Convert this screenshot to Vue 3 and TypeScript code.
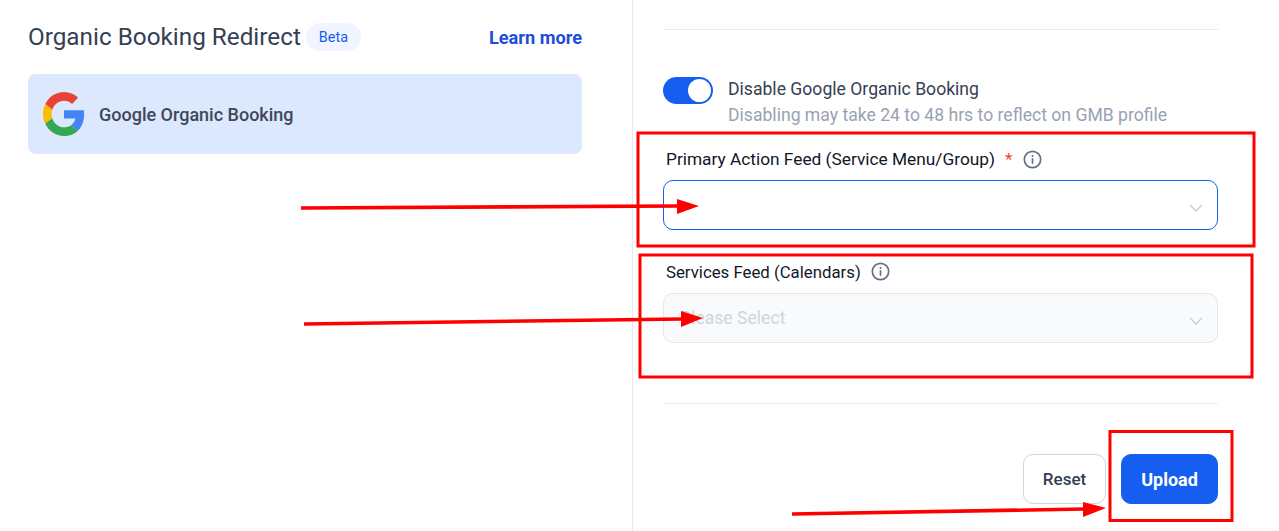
<script setup lang="ts">
interface Arrow {
  x1: number
  y1: number
  x2: number
  y2: number
  tip: string
}

interface Box {
  x: number
  y: number
  w: number
  h: number
}

// hand drawn markup on top of the screenshot
const boxes: Box[] = [
  { x: 638, y: 133, w: 616, h: 113 },
  { x: 640, y: 255, w: 612, h: 122 },
  { x: 1110, y: 431.5, w: 122, h: 89 },
]

const arrows: Arrow[] = [
  { x1: 301, y1: 208, x2: 678, y2: 206, tip: '677,199 699,206 677,214' },
  { x1: 304, y1: 324, x2: 682, y2: 319, tip: '681,311 703,318 681,327' },
  { x1: 792, y1: 514, x2: 1085, y2: 509, tip: '1083,502 1106,508 1083,517' },
]
</script>

<template>
  <div class="page">
    <aside class="side">
      <header class="side__head">
        <div class="side__title">
          <h2>Organic Booking Redirect</h2>
          <span class="beta">Beta</span>
        </div>
        <a class="learn">Learn more</a>
      </header>
      <div class="side__item">
        <svg class="g-logo" viewBox="0 0 48 48" width="42" height="44" preserveAspectRatio="none">
          <path fill="#EA4335" d="M24 9.5c3.54 0 6.71 1.22 9.21 3.6l6.85-6.85C35.9 2.38 30.47 0 24 0 14.62 0 6.51 5.38 2.56 13.22l7.98 6.19C12.43 13.72 17.74 9.5 24 9.5z" />
          <path fill="#4285F4" d="M46.98 24.55c0-1.57-.15-3.09-.38-4.55H24v9.02h12.94c-.58 2.96-2.26 5.48-4.78 7.18l7.73 6c4.51-4.18 7.09-10.36 7.09-17.65z" />
          <path fill="#FBBC05" d="M10.53 28.59c-.48-1.45-.76-2.99-.76-4.59s.27-3.14.76-4.59l-7.98-6.19C.92 16.46 0 20.12 0 24c0 3.88.92 7.54 2.56 10.78l7.97-6.19z" />
          <path fill="#34A853" d="M24 48c6.48 0 11.93-2.13 15.89-5.81l-7.73-6c-2.15 1.45-4.92 2.3-8.16 2.3-6.26 0-11.57-4.22-13.47-9.91l-7.98 6.19C6.51 42.62 14.62 48 24 48z" />
        </svg>
        <span>Google Organic Booking</span>
      </div>
    </aside>

    <main class="form">
      <hr class="rule" />

      <div class="toggle-row">
        <span class="toggle"><span class="toggle__knob"></span></span>
        <div class="toggle-row__text">
          <div class="toggle-row__label">Disable Google Organic Booking</div>
          <div class="toggle-row__hint">Disabling may take 24 to 48 hrs to reflect on GMB profile</div>
        </div>
      </div>

      <div class="field field--primary">
        <label class="field__label">
          Primary Action Feed (Service Menu/Group)
          <span class="req">*</span>
          <svg class="info" viewBox="0 0 20 20" width="19" height="19">
            <circle cx="10" cy="10" r="8.6" fill="none" stroke="#667085" stroke-width="1.8" />
            <path d="M10 9.2v4.6" stroke="#667085" stroke-width="1.8" stroke-linecap="round" />
            <circle cx="10" cy="6.3" r="1.1" fill="#667085" />
          </svg>
        </label>
        <div class="select select--focus">
          <svg class="chev" viewBox="0 0 14 8" width="14" height="8">
            <path d="M1 1l6 6 6-6" fill="none" stroke="#c9ccd2" stroke-width="1.3" />
          </svg>
        </div>
      </div>

      <div class="field field--calendars">
        <label class="field__label">
          Services Feed (Calendars)
          <svg class="info" viewBox="0 0 20 20" width="19" height="19">
            <circle cx="10" cy="10" r="8.6" fill="none" stroke="#667085" stroke-width="1.8" />
            <path d="M10 9.2v4.6" stroke="#667085" stroke-width="1.8" stroke-linecap="round" />
            <circle cx="10" cy="6.3" r="1.1" fill="#667085" />
          </svg>
        </label>
        <div class="select select--disabled">
          <span>Please Select</span>
          <svg class="chev" viewBox="0 0 14 8" width="14" height="8">
            <path d="M1 1l6 6 6-6" fill="none" stroke="#c9ccd2" stroke-width="1.3" />
          </svg>
        </div>
      </div>

      <hr class="rule rule--bottom" />

      <div class="actions">
        <button class="btn">Reset</button>
        <button class="btn btn--primary">Upload</button>
      </div>
    </main>

    <svg class="markup" viewBox="0 0 1279 531" width="1279" height="531">
      <rect
        v-for="(b, i) in boxes"
        :key="'b' + i"
        :x="b.x"
        :y="b.y"
        :width="b.w"
        :height="b.h"
        fill="none"
        stroke="#ff0000"
        stroke-width="3"
      />
      <g v-for="(a, i) in arrows" :key="'a' + i">
        <line :x1="a.x1" :y1="a.y1" :x2="a.x2" :y2="a.y2" stroke="#ff0000" stroke-width="3.6" />
        <polygon :points="a.tip" fill="#ff0000" />
      </g>
    </svg>
  </div>
</template>

<style scoped>
.page {
  position: relative;
  display: flex;
  width: 1279px;
  height: 531px;
  overflow: hidden;
  background: #fff;
  font-family: Roboto, "Liberation Sans", sans-serif;
  color: #344054;
}

.side {
  box-sizing: border-box;
  width: 633px;
  flex: none;
  padding: 21px 50px 0 28px;
  border-right: 1px solid #e8eaee;
}

.side__head {
  display: flex;
  justify-content: space-between;
  align-items: center;
  height: 32px;
}

.side__title {
  display: flex;
  align-items: center;
  gap: 5px;
}

.side__title h2 {
  margin: 0;
  font-size: 24.3px;
  font-weight: 400;
  line-height: 32px;
  color: #344054;
}

.beta {
  display: inline-flex;
  align-items: center;
  padding: 0 13px;
  height: 28px;
  border-radius: 14px;
  background: #f0f5ff;
  color: #155eef;
  font-size: 14.4px;
}

.learn {
  margin-top: 1px;
  font-size: 18.2px;
  font-weight: 700;
  color: #1d4ed8;
}

.side__item {
  display: flex;
  align-items: center;
  gap: 14px;
  height: 80px;
  margin-top: 21px;
  padding-left: 15px;
  border-radius: 8px;
  background: #dbe8fe;
  font-size: 18px;
  font-weight: 500;
  color: #3f4758;
}

.g-logo {
  flex: none;
}

.form {
  flex: 1;
  padding: 29px 61px 0 30px;
}

.rule {
  margin: 0;
  border: 0;
  border-top: 1px solid #eaecf0;
}

.rule--bottom {
  margin-top: 60px;
}

.toggle-row {
  display: flex;
  gap: 15px;
  margin-top: 47px;
  font-size: 17.6px;
  line-height: 26px;
}

.toggle-row__text {
  margin-top: -1px;
}

.toggle {
  position: relative;
  flex: none;
  width: 50px;
  height: 27px;
  border-radius: 14px;
  background: #155eef;
}

.toggle__knob {
  position: absolute;
  top: 2px;
  right: 2px;
  width: 23px;
  height: 23px;
  border-radius: 50%;
  background: #fff;
}

.toggle-row__label {
  color: #344054;
}

.toggle-row__hint {
  color: #98a2b3;
}

.field__label {
  display: flex;
  align-items: center;
  height: 24px;
  padding-left: 3px;
  font-size: 17.3px;
  color: #101828;
}

.field--primary {
  margin-top: 19px;
}

.field--calendars {
  margin-top: 30px;
}

.field--calendars .field__label {
  font-size: 16.8px;
}

.field--calendars .info {
  margin-left: 10px;
  margin-top: -1px;
}

.req {
  margin-left: 10px;
  color: #f04438;
}

.info {
  margin-left: 11px;
}

.select {
  box-sizing: border-box;
  display: flex;
  align-items: center;
  justify-content: space-between;
  height: 50px;
  margin-top: 9px;
  padding: 0 14px 0 16px;
  border-radius: 10px;
  font-size: 17.6px;
}

.select > span {
  margin-top: -1px;
}

.chev {
  margin-left: auto;
  margin-top: 6px;
}

.select--focus {
  border: 1px solid #155eef;
}

.select--disabled {
  border: 1px solid #e4e7ec;
  background: #f9fafb;
  color: #d0d5dd;
}

.actions {
  display: flex;
  justify-content: flex-end;
  gap: 15px;
  margin-top: 50px;
}

.btn {
  box-sizing: border-box;
  width: 83px;
  height: 50px;
  padding: 0;
  border: 1px solid #d0d5dd;
  border-radius: 10px;
  background: #fff;
  color: #344054;
  font-family: Roboto, "Liberation Sans", sans-serif;
  font-size: 17px;
  font-weight: 500;
}

.btn--primary {
  width: 97px;
  border-color: #155eef;
  background: #155eef;
  color: #fff;
  font-size: 18px;
  font-weight: 700;
}

.markup {
  position: absolute;
  top: 0;
  left: 0;
  pointer-events: none;
}
</style>
